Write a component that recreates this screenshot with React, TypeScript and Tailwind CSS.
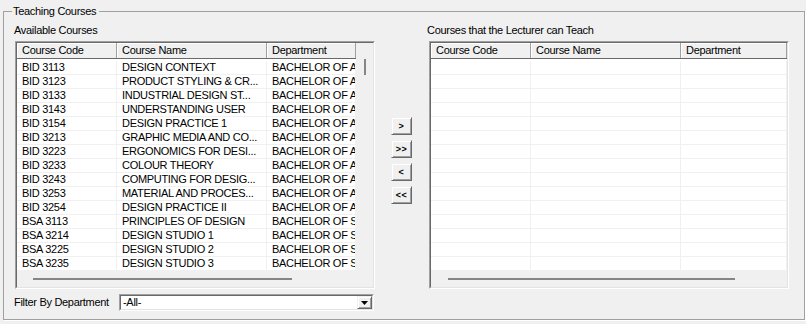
import React from "react";

type Course = { code: string; name: string; dept: string };

const courses: Course[] = [
  { code: "BID 3113", name: "DESIGN CONTEXT", dept: "BACHELOR OF ARTS" },
  { code: "BID 3123", name: "PRODUCT STYLING & CR...", dept: "BACHELOR OF ARTS" },
  { code: "BID 3133", name: "INDUSTRIAL DESIGN ST...", dept: "BACHELOR OF ARTS" },
  { code: "BID 3143", name: "UNDERSTANDING USER", dept: "BACHELOR OF ARTS" },
  { code: "BID 3154", name: "DESIGN PRACTICE 1", dept: "BACHELOR OF ARTS" },
  { code: "BID 3213", name: "GRAPHIC MEDIA AND CO...", dept: "BACHELOR OF ARTS" },
  { code: "BID 3223", name: "ERGONOMICS FOR DESI...", dept: "BACHELOR OF ARTS" },
  { code: "BID 3233", name: "COLOUR THEORY", dept: "BACHELOR OF ARTS" },
  { code: "BID 3243", name: "COMPUTING FOR DESIG...", dept: "BACHELOR OF ARTS" },
  { code: "BID 3253", name: "MATERIAL AND PROCES...", dept: "BACHELOR OF ARTS" },
  { code: "BID 3254", name: "DESIGN PRACTICE II", dept: "BACHELOR OF ARTS" },
  { code: "BSA 3113", name: "PRINCIPLES OF DESIGN", dept: "BACHELOR OF SCIENCE" },
  { code: "BSA 3214", name: "DESIGN STUDIO 1", dept: "BACHELOR OF SCIENCE" },
  { code: "BSA 3225", name: "DESIGN STUDIO 2", dept: "BACHELOR OF SCIENCE" },
  { code: "BSA 3235", name: "DESIGN STUDIO 3", dept: "BACHELOR OF SCIENCE" },
];

const emptyRows: Course[] = Array.from({ length: 15 }, () => ({ code: "", name: "", dept: "" }));

function HeaderCell({ label, w }: { label: string; w: string }) {
  return (
    <div className={`${w} h-full shrink-0 flex items-center pl-[5px] border-r border-r-[#a0a0a0] shadow-[inset_1px_1px_0_#fff] overflow-hidden whitespace-nowrap`}>
      {label}
    </div>
  );
}

function Cell({ text, w }: { text: string; w: string }) {
  return (
    <div className={`${w} h-full shrink-0 pl-[5px] border-r border-r-[#f0f0f0] overflow-hidden whitespace-nowrap leading-[13px]`}>
      {text}
    </div>
  );
}

function CourseGrid({
  rows,
  deptW,
  gridW,
  vscroll,
  thumbClass,
}: {
  rows: Course[];
  deptW: string;
  gridW: string;
  vscroll?: boolean;
  thumbClass: string;
}) {
  return (
    <div className="w-[360px] h-[248px] flex border border-t-[#a0a0a0] border-l-[#a0a0a0] border-r-white border-b-white">
      <div className="flex-1 flex flex-col border border-t-[#696969] border-l-[#696969] border-r-[#e3e3e3] border-b-[#e3e3e3] bg-[#f0f0f0]">
        <div className="h-[228px] flex">
          <div className={`${gridW} h-full flex flex-col bg-white`}>
            {/* header */}
            <div className="h-[16px] flex bg-[#f0f0f0] border-b border-b-[#696969]">
              <HeaderCell label="Course Code" w="w-[100px]" />
              <HeaderCell label="Course Name" w="w-[150px]" />
              <HeaderCell label="Department" w={deptW} />
            </div>
            <div className="h-[2px]" />
            {rows.map((r, i) => (
              <div key={i} className="h-[14px] flex border-b border-b-[#f0f0f0]">
                <Cell text={r.code} w="w-[100px]" />
                <Cell text={r.name} w="w-[150px]" />
                <Cell text={r.dept} w={deptW} />
              </div>
            ))}
          </div>
          {vscroll && (
            <div className="w-[17px] h-full bg-[#f0f0f0] pt-[16px] pl-[8px]">
              <div className="w-[2px] h-[16px] bg-[#858585]" />
            </div>
          )}
        </div>
        {/* horizontal scrollbar */}
        <div className="h-[16px] pt-[7px]">
          <div className={`${thumbClass} h-[2px] bg-[#858585]`} />
        </div>
      </div>
    </div>
  );
}

function MoveButton({ label }: { label: string }) {
  return (
    <button className="w-[21px] h-[18px] flex items-center justify-center bg-[#f0f0f0] border border-t-[#f0f0f0] border-l-[#f0f0f0] border-r-[#696969] border-b-[#696969] shadow-[inset_1px_1px_0_#fff,inset_-1px_-1px_0_#a0a0a0] text-[9px] font-bold leading-none tracking-[0.5px]">
      {label}
    </button>
  );
}

export default function App() {
  return (
    <div className="w-[806px] h-[324px] bg-[#f0f0f0] overflow-hidden font-['Liberation_Sans',Arial,sans-serif] text-[11px] tracking-[-0.3px] text-black">
      <fieldset className="ml-[3px] mt-[3px] w-[802px] h-[317px] border border-[#a0a0a0] shadow-[1px_1px_0_#fff]">
        <legend className="ml-[8px] pl-[1px] pr-[3px] pt-[2px] pb-[2px] leading-[13px] bg-[#f0f0f0]">Teaching Courses</legend>

        <div className="flex pl-[10px]">
          {/* Available courses */}
          <div className="flex flex-col pt-[4px]">
            <div className="leading-[13px]">Available Courses</div>
            <div className="mt-[4px] ml-[1px]">
              <CourseGrid rows={courses} deptW="w-[89px]" gridW="w-[339px]" vscroll thumbClass="ml-[16px] w-[259px]" />
            </div>
            <div className="mt-[5px] h-[17px] flex items-center">
              <div className="w-[105px] whitespace-nowrap">Filter By Department</div>
              <div className="w-[255px] h-[17px] flex border border-t-[#a0a0a0] border-l-[#a0a0a0] border-r-white border-b-white">
                <div className="flex-1 flex items-center justify-between bg-white border border-t-[#696969] border-l-[#696969] border-r-[#e3e3e3] border-b-[#e3e3e3]">
                  <span className="pl-[2px] leading-[13px]">-All-</span>
                  <div className="w-[15px] h-full flex items-center justify-center bg-[#f0f0f0] border border-t-[#f0f0f0] border-l-[#f0f0f0] border-r-[#696969] border-b-[#696969] shadow-[inset_1px_1px_0_#fff,inset_-1px_-1px_0_#a0a0a0]">
                    <svg width="7" height="4" viewBox="0 0 7 4">
                      <polygon points="0,0 7,0 3.5,4" fill="#000" />
                    </svg>
                  </div>
                </div>
              </div>
            </div>
          </div>

          {/* Move buttons */}
          <div className="ml-[16px] mt-[97px] flex flex-col gap-[5px] self-start">
            <MoveButton label=">" />
            <MoveButton label=">>" />
            <MoveButton label="<" />
            <MoveButton label="<<" />
          </div>

          {/* Lecturer courses */}
          <div className="ml-[15px] flex flex-col pt-[4px]">
            <div className="leading-[13px]">Courses that the Lecturer can Teach</div>
            <div className="mt-[4px] ml-[2px]">
              <CourseGrid rows={emptyRows} deptW="w-[106px]" gridW="w-[356px]" thumbClass="ml-[17px] w-[287px]" />
            </div>
          </div>
        </div>
      </fieldset>
    </div>
  );
}
